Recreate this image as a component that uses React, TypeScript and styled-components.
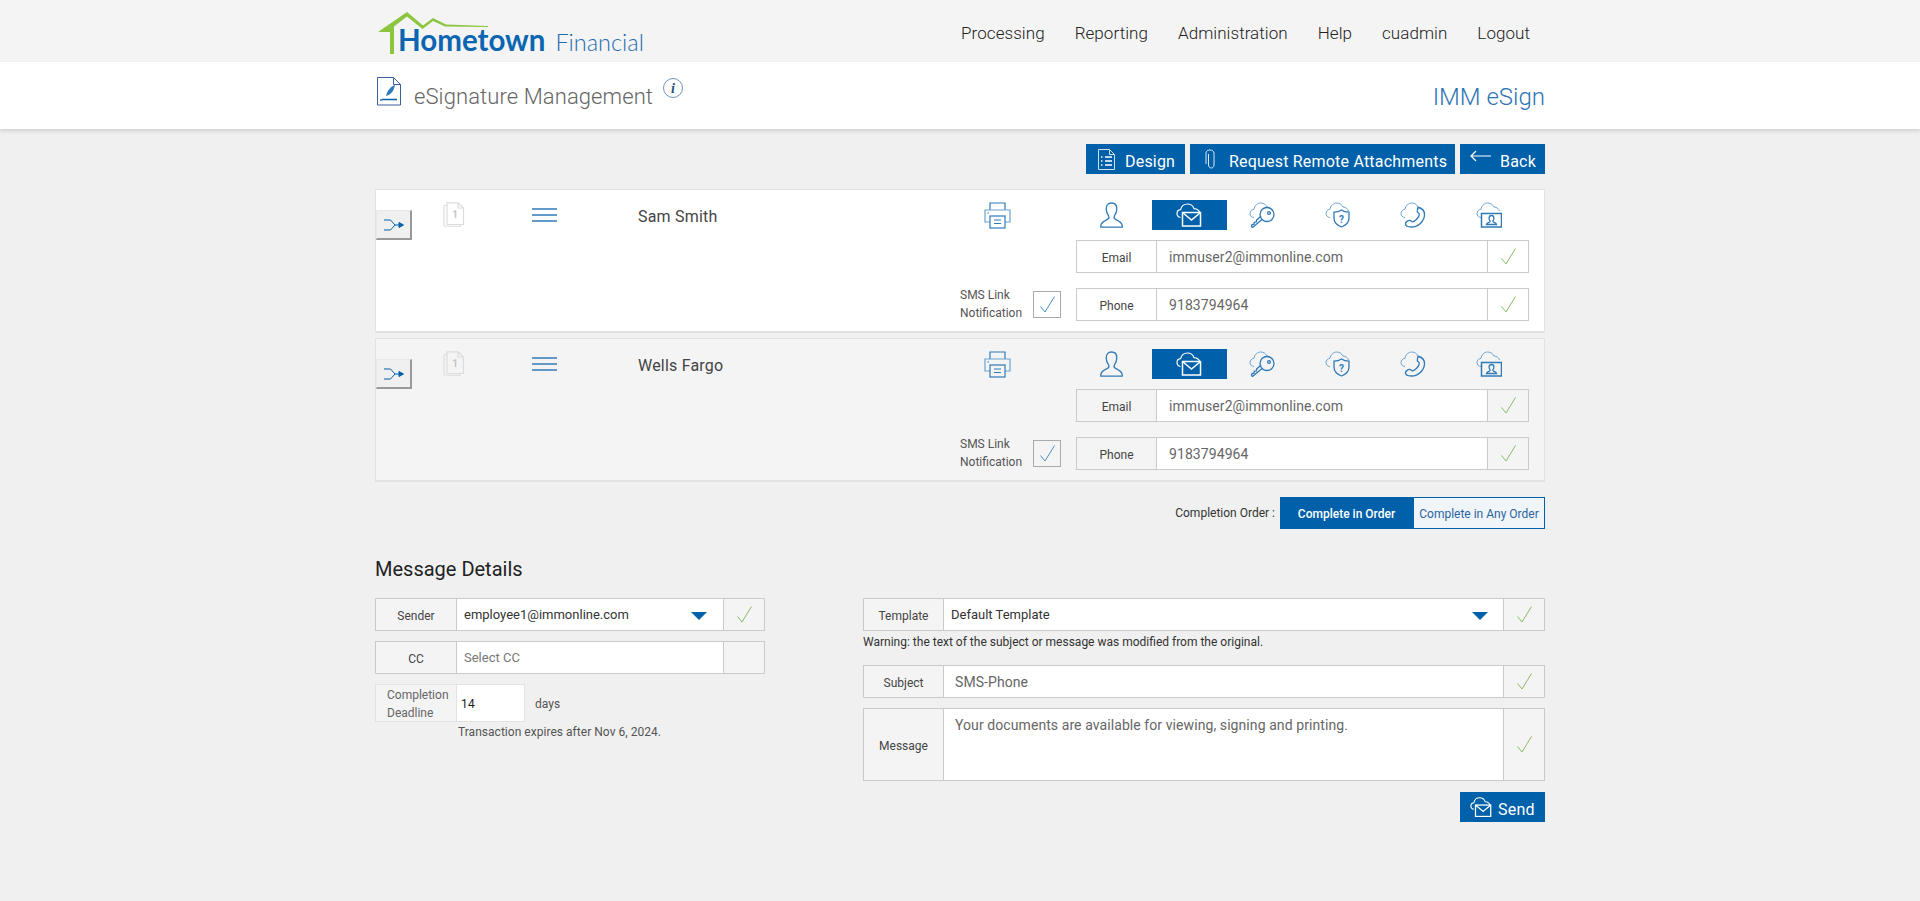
import React from "react";
import styled, { createGlobalStyle } from "styled-components";

const BLUE = "#0060a9";
const LINE = "#2f7ab8";
const PALE = "#6aa3d2";

const Global = createGlobalStyle`
  html, body { margin: 0; padding: 0; background: #f0f0f0; }
  body { font-family: Roboto, "Liberation Sans", sans-serif; color: #444; }
  * { box-sizing: border-box; }
`;

const Page = styled.div`min-height: 901px; background: #f0f0f0; overflow: hidden;`;
const Container = styled.div`width: 1170px; margin: 0 auto;`;
const TopBar = styled.header`height: 62px; background: #f4f4f4;`;
const TopInner = styled(Container)`display: flex; justify-content: space-between; height: 100%;`;
const Logo = styled.div`position: relative; width: 280px; height: 62px; display: flex; align-items: baseline; padding: 23px 0 0 23px; color: #0a66b0;`;
const LogoArt = styled.svg`position: absolute; left: 0; top: 8px;`;
const LogoStrong = styled.span`font: 700 29.5px/34px Lato, sans-serif;`;
const LogoLight = styled.span`font: 300 23.5px/34px Lato, sans-serif; margin-left: 10px; color: #1f6cb0;`;
const Nav = styled.nav`display: flex; gap: 30px; padding: 24px 15px 0 0;`;
const NavLink = styled.a`font: 300 17px/19px Roboto, sans-serif; letter-spacing: .06px; color: #222;`;

const TitleBar = styled.div`height: 67px; background: #fff; box-shadow: 0 2px 4px rgba(0,0,0,.14); position: relative;`;
const TitleInner = styled(Container)`display: flex; align-items: flex-start; height: 100%;`;
const TitleIcon = styled.svg`margin: 15px 0 0 2px;`;
const TitleText = styled.h1`margin: 22px 0 0 13px; font: 300 22px/26px Roboto, sans-serif; letter-spacing: .1px; color: #666;`;
const InfoIcon = styled.svg`margin: 16px 0 0 10px;`;
const Product = styled.div`margin: 21px 0 0 auto; font: 300 24px/28px Roboto, sans-serif; color: #2c74b4;`;

const Toolbar = styled.div`display: flex; justify-content: flex-end; gap: 5px; margin-top: 15px;`;
const Btn = styled.button<{ $w: number; $gap: number; $pad: number }>`
  width: ${p => p.$w}px; height: 30px; border: 0; background: ${BLUE}; color: #fff; padding: 0 0 0 ${p => p.$pad}px;
  display: flex; align-items: center; gap: ${p => p.$gap}px; font: 400 16px/20px Roboto, sans-serif; letter-spacing: .2px;
`;
const BtnText = styled.span`padding-top: 5px;`;

const Card = styled.section<{ $alt?: boolean }>`
  display: flex; height: 144px; margin-top: ${p => (p.$alt ? 5 : 15)}px;
  background: ${p => (p.$alt ? "#f4f4f4" : "#fff")};
  border: 1px solid #e2e2e2; border-bottom-width: 2px;
`;
const Left = styled.div`width: 700px; display: flex; flex-direction: column; justify-content: space-between; padding-bottom: 9px;`;
const LeftTop = styled.div`display: grid; grid-template-columns: 67px 89px 106px 346px 1fr; align-items: start;`;
const Shuffle = styled.button`
  width: 36px; height: 30px; margin-top: 20px; padding: 0; display: flex; align-items: center; justify-content: center;
  background: #f0f0f0; border: 1px solid #e8e8e8; border-right: 2px solid #999; border-bottom: 2px solid #999;
`;
const DocIcon = styled.svg`margin-top: 12px;`;
const Lines = styled.svg`margin-top: 18px;`;
const Name = styled.div`margin-top: 17px; font: 400 16px/20px Roboto, sans-serif; letter-spacing: .2px; color: #444;`;
const Printer = styled.svg`margin-top: 12px;`;
const SmsRow = styled.div`display: flex; justify-content: flex-end; align-items: center; gap: 10px; padding-right: 15px;`;
const SmsText = styled.div`width: 63px; font: 400 12px/18px Roboto, sans-serif; color: #555; white-space: nowrap;`;
const CheckBox = styled.div`width: 28px; height: 27px; border: 1px solid #aaa; display: flex; align-items: center; justify-content: center;`;
const Right = styled.div`width: 453px; padding-top: 10px;`;
const Tabs = styled.div`display: grid; grid-template-columns: repeat(6, 1fr); height: 30px; margin-bottom: 10px;`;
const Tab = styled.div<{ $on?: boolean }>`
  display: flex; align-items: center; justify-content: center; padding-right: ${p => (p.$on ? 0 : 5)}px;
  background: ${p => (p.$on ? BLUE : "transparent")};
`;

const Field = styled.div<{ $h?: number; $mb?: number; $bg?: string }>`
  display: flex; height: ${p => p.$h ?? 33}px; margin-bottom: ${p => p.$mb ?? 0}px;
  border: 1px solid #cacaca; background: ${p => p.$bg ?? "transparent"};
`;
const FieldLabel = styled.div<{ $w: number }>`
  width: ${p => p.$w}px; flex: none; display: flex; align-items: center; justify-content: center;
  font: 400 12px/14px Roboto, sans-serif; color: #444; padding-top: 2px;
`;
const FieldValue = styled.div<{ $top?: boolean; $tone?: string; $fs?: number; $pad?: number }>`
  flex: 1; position: relative; background: #fff; display: flex; align-items: ${p => (p.$top ? "flex-start" : "center")};
  border-left: 1px solid #cacaca; padding: ${p => (p.$top ? "7px" : "0")} 0 0 ${p => p.$pad ?? 11}px;
  font: 400 ${p => p.$fs ?? 14}px/18px Roboto, sans-serif; letter-spacing: ${p => ((p.$fs ?? 14) === 14 ? ".08px" : "0")};
  color: ${p => p.$tone ?? "#666"};
`;
const FieldCheck = styled.div`width: 41px; flex: none; border-left: 1px solid #cacaca; display: flex; align-items: center; justify-content: center;`;
const Caret = styled.i<{ $right: number }>`
  position: absolute; right: ${p => p.$right}px; top: 13px; width: 0; height: 0;
  border-left: 8px solid transparent; border-right: 8px solid transparent; border-top: 8px solid ${BLUE};
`;

const OrderRow = styled.div`display: flex; justify-content: flex-end; align-items: flex-start; margin-top: 15px;`;
const OrderLabel = styled.div`font: 400 12px/14px Roboto, sans-serif; color: #333; margin: 9px 5px 0 0;`;
const OrderBtn = styled.div<{ $on?: boolean }>`
  width: ${p => (p.$on ? 133 : 132)}px; height: 32px; display: flex; align-items: center; justify-content: center; padding-top: 2px;
  border: 1px solid ${BLUE}; font: ${p => (p.$on ? 500 : 400)} 12px/14px Roboto, sans-serif;
  background: ${p => (p.$on ? BLUE : "#f0f5fa")}; color: ${p => (p.$on ? "#fff" : "#2c64a0")};
`;

const Heading = styled.h2`margin: 27px 0 16px; font: 400 20px/26px Roboto, sans-serif; color: #222;`;
const Columns = styled.div`display: grid; grid-template-columns: 390px 682px; column-gap: 98px;`;
const Deadline = styled.div`display: flex; align-items: center; height: 38px;`;
const DeadlineLabel = styled.div`
  width: 81px; height: 38px; background: #f4f4f4; border: 1px solid #e2e2e2; border-right: 0;
  font: 400 12px/18px Roboto, sans-serif; color: #666; padding: 1px 0 0 11px; white-space: nowrap;
`;
const DeadlineInput = styled.div`
  width: 69px; height: 38px; background: #fff; border: 1px solid #e2e2e2; padding: 1px 0 0 4px;
  font: 400 12px/36px Roboto, sans-serif; color: #222; letter-spacing: .3px;
`;
const Days = styled.span`margin-left: 10px; padding-top: 2px; font: 400 12px/14px Roboto, sans-serif; color: #555;`;
const Expires = styled.div`margin: 3px 0 0 83px; font: 400 12px/14px Roboto, sans-serif; letter-spacing: .03px; color: #555;`;
const Warn = styled.div`height: 34px; padding-top: 3px; font: 400 12px/16px Roboto, sans-serif; color: #333;`;
const SendRow = styled.div`display: flex; justify-content: flex-end; margin-top: 11px;`;

const Check = ({ c = "#8ab866" }: { c?: string }) => (
  <svg width="15" height="17" viewBox="0 0 15 17" fill="none" stroke={c} strokeWidth="1">
    <path d="M.5 10.500 5 16 14.500.5" />
  </svg>
);

const CloudBit = ({ wide }: { wide?: boolean }) => (
  <path
    d={wide
      ? "M5 15.500C2.700 15.500 1 13.700 1 11.500s1.700-4 3.900-4.100C5.600 3.700 8.400 1 11.700 1c2.800 0 5.200 1.600 6.200 4 2.800.1 4.800 1.700 5.600 4"
      : "M5.500 16H5C2.700 16 1 14.200 1 12s1.700-4 3.900-4.100C5.600 4.200 8.400 1.500 11.700 1.500c2.800 0 5.200 1.600 6.200 4"}
    fill="none" stroke={PALE} strokeWidth="1"
  />
);

const Ico = ({ children }: { children: React.ReactNode }) => (
  <svg width="26" height="26" viewBox="0 0 26 26" fill="none" stroke={LINE} strokeWidth="1.300">{children}</svg>
);

const Person = () => (
  <svg width="23" height="26" viewBox="0 0 23 26" fill="none" stroke={LINE} strokeWidth="1.300">
    <path d="M11.500 1C8 1 6.200 3.400 6.200 6.800c0 3 1 5.300 2.300 6.800.6 1.100.5 2.600-.5 3.500-1.300 1.200-6.300 2-7.200 6.200v1.900h21.400v-1.900c-.9-4.200-5.900-5-7.200-6.200-1-.9-1.100-2.400-.5-3.500 1.300-1.500 2.300-3.800 2.300-6.800C16.800 3.400 15 1 11.500 1z" />
  </svg>
);
const CloudMail = ({ w = 26 }: { w?: number }) => (
  <svg width={w} height={(w * 24) / 26} viewBox="0 0 26 24" fill="none" stroke="#fff" strokeWidth="1.200">
    <path d="M4.500 14.500C2.400 14.200 1 12.600 1 10.600c0-2.100 1.600-3.700 3.600-3.900C5.400 3.300 8.200 1 11.400 1c3 0 5.600 1.900 6.600 4.600 3 .1 5.400 2.200 6 4.700" />
    <rect x="6.500" y="9.500" width="18" height="13.500" strokeWidth="1.500" />
    <path d="M6.500 9.500l9 7.500 9-7.500" strokeWidth="1.500" />
  </svg>
);
const CloudKey = () => (
  <Ico>
    <CloudBit wide />
    <circle cx="18" cy="12.500" r="7" fill="#fff" fillOpacity="0" />
    <circle cx="20" cy="11" r="1.400" />
    <path d="M13 17.500 3.500 25.500l-1-1 .5-2 2-.3.3-2 2-.3.4-2 4.400-4" />
  </Ico>
);
const CloudShield = () => (
  <Ico>
    <CloudBit wide />
    <path d="M16.500 8c2 1.400 4.300 2.100 7.500 2.200v5.800c0 4-3 7.200-7.500 9-4.500-1.800-7.500-5-7.500-9v-5.800c3.200-.1 5.500-.8 7.500-2.200z" />
    <text x="16.500" y="20.500" textAnchor="middle" fontFamily="Roboto, sans-serif" fontWeight="700" fontSize="10" fill={LINE} stroke="none">?</text>
  </Ico>
);
const CloudPhone = () => (
  <Ico>
    <CloudBit wide />
    <path d="M18 5.500c4 .8 6.500 3.200 6.500 7 0 6.500-6 12.500-13 12.500-3 0-6-.7-6-3.200 0-2 2.600-3.400 4.400-3.400 1.200 0 1.300 1.400 2.400 1.400 2.800 0 7-4.800 7-7.600 0-1.200-2-1.600-2-2.800 0-1.500.5-2.500.7-4.400z" />
  </Ico>
);
const CloudScreen = () => (
  <Ico>
    <CloudBit wide />
    <rect x="5.500" y="11.500" width="20" height="13.500" strokeWidth="1.500" />
    <path d="M15.500 13.500c-1.600 0-2.400 1.200-2.400 2.700 0 1.200.5 2 1 2.600.2.600-.2 1-.7 1.300-1.200.5-2.800.8-3 2.400h10.200c-.2-1.600-1.800-1.900-3-2.400-.5-.3-.9-.7-.7-1.300.5-.6 1-1.400 1-2.600 0-1.500-.8-2.700-2.400-2.700z" />
  </Ico>
);

const RecipientCard = ({ alt, name }: { alt?: boolean; name: string }) => (
  <Card $alt={alt}>
    <Left>
      <LeftTop>
        <Shuffle aria-label="route">
          <svg width="22" height="14" viewBox="0 0 22 14" fill="none" stroke={BLUE} strokeWidth="1">
            <path d="M1 2h6.500l4.500 5-4.500 5H1M12 7h6" />
            <path d="M16 4.500 20.500 7 16 9.500z" fill={BLUE} />
          </svg>
        </Shuffle>
        <DocIcon width="22" height="26" viewBox="0 0 22 26" fill="none" stroke="#dcdcdc" strokeWidth="1.200">
          <path d="M1 3.500h3M1 3.500V24l16 .5v-2" />
          <path d="M4 .8h11l5.500 5.200v16.500H4zM15 .8V6h5.500" />
          <text x="12" y="15.500" textAnchor="middle" fontFamily="Roboto, sans-serif" fontWeight="700" fontSize="10" fill="#c4c4c4" stroke="none">1</text>
        </DocIcon>
        <Lines width="25" height="14" viewBox="0 0 25 14" fill="none" stroke={LINE} strokeWidth="1.400">
          <path d="M0 1h25M0 7h25M0 13h25" />
        </Lines>
        <Name>{name}</Name>
        <Printer width="27" height="27" viewBox="0 0 27 27" fill="none" stroke={PALE} strokeWidth="1.200">
          <path d="M6 8V1h15v7" stroke={LINE} />
          <path d="M6 20H1V8h25v12h-5" />
          <rect x="6" y="14" width="15" height="12" stroke={LINE} />
          <path d="M10 18h7M10 21.500h7" stroke={LINE} />
          <path d="M3.500 11h1.500" stroke={LINE} />
        </Printer>
      </LeftTop>
      <SmsRow>
        <SmsText>SMS Link<br />Notification</SmsText>
        <CheckBox><Check c="#4a90c8" /></CheckBox>
      </SmsRow>
    </Left>
    <Right>
      <Tabs>
        <Tab><Person /></Tab>
        <Tab $on><CloudMail /></Tab>
        <Tab><CloudKey /></Tab>
        <Tab><CloudShield /></Tab>
        <Tab><CloudPhone /></Tab>
        <Tab><CloudScreen /></Tab>
      </Tabs>
      <Field $mb={15}>
        <FieldLabel $w={79}>Email</FieldLabel>
        <FieldValue $pad={12}>immuser2@immonline.com</FieldValue>
        <FieldCheck><Check /></FieldCheck>
      </Field>
      <Field>
        <FieldLabel $w={79}>Phone</FieldLabel>
        <FieldValue $pad={12}>9183794964</FieldValue>
        <FieldCheck><Check /></FieldCheck>
      </Field>
    </Right>
  </Card>
);

export default function App() {
  return (
    <Page>
      <Global />
      <TopBar>
        <TopInner>
          <Logo>
            <LogoArt width="125" height="50" viewBox="0 0 125 50">
              <path d="M3 24 32 4l16 13.500L58 10l13 6.500 42 1.500v1l-43-.5L58 13 47.500 21 32 8.500 19 18.500V46h-4V24z" fill="#8cc63f" />
            </LogoArt>
            <LogoStrong>Hometown</LogoStrong>
            <LogoLight>Financial</LogoLight>
          </Logo>
          <Nav>
            {["Processing", "Reporting", "Administration", "Help", "cuadmin", "Logout"].map(t => (
              <NavLink key={t}>{t}</NavLink>
            ))}
          </Nav>
        </TopInner>
      </TopBar>
      <TitleBar>
        <TitleInner>
          <TitleIcon width="24" height="29" viewBox="0 0 24 29" fill="none" stroke="#3a5fa0" strokeWidth="1">
            <path d="M.5.500h16l7 7v20.500H.5zM16.500.5v7h7" />
            <path d="M9 19c1-5 4-9 9-11-1 5-3 9-9 11z" fill="#2f7ab8" stroke="none" />
            <path d="M5 22.500h15" stroke="#0060a9" strokeWidth="1.500" />
            <path d="M3 22l2 2M5 22l-2 2" strokeWidth=".7" />
          </TitleIcon>
          <TitleText>eSignature Management</TitleText>
          <InfoIcon width="20" height="20" viewBox="0 0 20 20" fill="none" stroke="#6f93b8" strokeWidth="1">
            <circle cx="10" cy="10" r="9.500" />
            <text x="10" y="15" textAnchor="middle" fontFamily="'Liberation Serif', serif" fontStyle="italic" fontWeight="700" fontSize="14" fill="#1d4f80" stroke="none">i</text>
          </InfoIcon>
          <Product>IMM eSign</Product>
        </TitleInner>
      </TitleBar>
      <Container>
        <Toolbar>
          <Btn $w={99} $pad={12} $gap={10}>
            <svg width="17" height="21" viewBox="0 0 17 21" fill="none" stroke="#cfe0f0" strokeWidth="1">
              <path d="M.5.500h11l5 5v15H.5zM11.500.5v5h5" />
              <path d="M3 8h1.500M3 12h1.500M3 16h1.500M7 8h7M7 12h7M7 16h7" strokeWidth="1.500" stroke="#fff" />
            </svg>
            <BtnText>Design</BtnText>
          </Btn>
          <Btn $w={265} $pad={15} $gap={14}>
            <svg width="10" height="21" viewBox="0 0 10 21" fill="none" stroke="#dbe8f4" strokeWidth="1">
              <path d="M3.500 5v11c0 4 5.500 4 5.500 0V4C9 0 1 0 1 4v11" />
            </svg>
            <BtnText>Request Remote Attachments</BtnText>
          </Btn>
          <Btn $w={85} $pad={10} $gap={9}>
            <svg width="21" height="12" viewBox="0 0 21 12" fill="none" stroke="#fff" strokeWidth="1.200" style={{ marginTop: -6 }}>
              <path d="M21 6H1M6 1 1 6l5 5" />
            </svg>
            <BtnText>Back</BtnText>
          </Btn>
        </Toolbar>

        <RecipientCard name="Sam Smith" />
        <RecipientCard alt name="Wells Fargo" />

        <OrderRow>
          <OrderLabel>Completion Order :</OrderLabel>
          <OrderBtn $on>Complete in Order</OrderBtn>
          <OrderBtn>Complete in Any Order</OrderBtn>
        </OrderRow>

        <Heading>Message Details</Heading>
        <Columns>
          <div>
            <Field $mb={10} $bg="#f4f4f4">
              <FieldLabel $w={80}>Sender</FieldLabel>
              <FieldValue $fs={13} $pad={7} $tone="#333">employee1@immonline.com<Caret $right={16} /></FieldValue>
              <FieldCheck><Check /></FieldCheck>
            </Field>
            <Field $mb={10} $bg="#f4f4f4">
              <FieldLabel $w={80}>CC</FieldLabel>
              <FieldValue $fs={13} $pad={7} $tone="#777">Select CC</FieldValue>
              <FieldCheck />
            </Field>
            <Deadline>
              <DeadlineLabel>Completion<br />Deadline</DeadlineLabel>
              <DeadlineInput>14</DeadlineInput>
              <Days>days</Days>
            </Deadline>
            <Expires>Transaction expires after Nov 6, 2024.</Expires>
          </div>
          <div>
            <Field $bg="#f4f4f4">
              <FieldLabel $w={79}>Template</FieldLabel>
              <FieldValue $fs={13} $pad={7} $tone="#333">Default Template<Caret $right={15} /></FieldValue>
              <FieldCheck><Check /></FieldCheck>
            </Field>
            <Warn>Warning: the text of the subject or message was modified from the original.</Warn>
            <Field $mb={10} $bg="#f4f4f4">
              <FieldLabel $w={79}>Subject</FieldLabel>
              <FieldValue>SMS-Phone</FieldValue>
              <FieldCheck><Check /></FieldCheck>
            </Field>
            <Field $h={73} $bg="#f4f4f4">
              <FieldLabel $w={79}>Message</FieldLabel>
              <FieldValue $top>Your documents are available for viewing, signing and printing.</FieldValue>
              <FieldCheck><Check /></FieldCheck>
            </Field>
            <SendRow>
              <Btn $w={85} $pad={10} $gap={6}>
                <CloudMail w={22} />
                <BtnText>Send</BtnText>
              </Btn>
            </SendRow>
          </div>
        </Columns>
      </Container>
    </Page>
  );
}
